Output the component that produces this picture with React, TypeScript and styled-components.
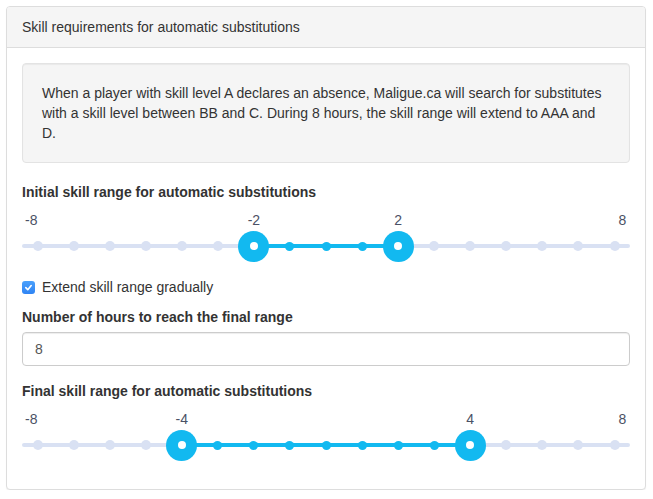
import React from "react";
import styled, { createGlobalStyle } from "styled-components";

const GlobalStyle = createGlobalStyle`
  html, body { margin: 0; padding: 0; background: #fff; }
  body {
    font-family: "Liberation Sans", Arial, sans-serif;
    font-size: 14px;
    line-height: 20px;
    color: #333;
  }
  * { box-sizing: border-box; }
`;

const Panel = styled.section`
  margin: 6px 0 0 6px;
  width: 640px;
  border: 1px solid #ddd;
  border-radius: 4px;
  background: #fff;
  box-shadow: 0 1px 1px rgba(0, 0, 0, 0.05);
`;

const PanelHeading = styled.div`
  padding: 10px 15px;
  background: #f5f5f5;
  border-bottom: 1px solid #ddd;
  border-radius: 3px 3px 0 0;
`;

const PanelBody = styled.div`
  padding: 15px 15px 23px;
`;

const Well = styled.div`
  padding: 19px;
  background: #f5f5f5;
  border: 1px solid #e3e3e3;
  border-radius: 4px;
  box-shadow: inset 0 1px 1px rgba(0, 0, 0, 0.05);
  margin-bottom: 19px;
`;

const FieldLabel = styled.label`
  display: block;
  font-weight: bold;
  margin-bottom: 5px;
`;

const CheckRow = styled.label`
  display: flex;
  align-items: center;
  gap: 7px;
  margin: 10px 0;
`;

const CheckBox = styled.span`
  width: 13px;
  height: 13px;
  border-radius: 3px;
  background: linear-gradient(#4aa0fb, #2f84f4);
  display: flex;
  align-items: center;
  justify-content: center;
`;

const TextInput = styled.input`
  display: block;
  width: 100%;
  height: 34px;
  padding: 6px 12px;
  font: inherit;
  color: #555;
  border: 1px solid #ccc;
  border-radius: 4px;
  box-shadow: inset 0 1px 1px rgba(0, 0, 0, 0.075);
  margin-bottom: 15px;
  outline: none;
`;

const SliderBox = styled.div`
  position: relative;
  height: 60px;
`;

/* the rail lies underneath the ticks */
const Rail = styled.div`
  position: absolute;
  left: 0;
  right: 0;
  top: 37px;
  height: 4px;
  border-radius: 2px;
`;

const TickRow = styled.div`
  position: relative;
  display: flex;
  justify-content: space-between;
  padding: 3px 15.5px 0;
`;

const Tick = styled.div<{ $align: "start" | "center" | "end" }>`
  width: 0;
  display: flex;
  flex-direction: column;
  align-items: ${(p) => (p.$align === "start" ? "flex-start" : p.$align === "end" ? "flex-end" : "center")};
`;

const TickLabel = styled.span<{ $shift?: boolean }>`
  height: 20px;
  line-height: 20px;
  color: #4b5165;
  white-space: nowrap;
  padding-left: ${(p) => (p.$shift ? "4px" : "0")};
`;

const MarkCell = styled.div`
  align-self: center;
  width: 0;
  height: 32px;
  display: flex;
  align-items: center;
  justify-content: center;
`;

const Dot = styled.span<{ $on: boolean }>`
  flex: none;
  width: ${(p) => (p.$on ? 9 : 10)}px;
  height: ${(p) => (p.$on ? 9 : 10)}px;
  border-radius: 50%;
  background: ${(p) => (p.$on ? "#12b9f0" : "#d9e1f3")};
`;

const Handle = styled.span`
  flex: none;
  width: 31px;
  height: 31px;
  border-radius: 50%;
  background: #12b9f0;
  display: flex;
  align-items: center;
  justify-content: center;
  &::after {
    content: "";
    width: 8px;
    height: 8px;
    border-radius: 50%;
    background: #fff;
  }
`;

const PAD = 15.5;
const GREY = "#d9e1f3";
const BLUE = "#12b9f0";

function RangeSlider({ min, max, from, to }: { min: number; max: number; from: number; to: number }) {
  const span = max - min;
  const f = (v: number) => (v - min) / span;
  const at = (v: number) => `calc(${PAD}px + ${f(v)} * (100% - ${PAD * 2}px))`;
  const values: number[] = [];
  for (let v = min; v <= max; v++) values.push(v);
  const rail = `linear-gradient(to right, ${GREY} 0, ${GREY} ${at(from)}, ${BLUE} ${at(from)}, ${BLUE} ${at(to)}, ${GREY} ${at(to)}, ${GREY} 100%)`;
  return (
    <SliderBox>
      <Rail style={{ background: rail }} />
      <TickRow>
        {values.map((v) => {
          const isHandle = v === from || v === to;
          const showLabel = isHandle || v === min || v === max;
          const align = v === min ? "end" : v === max ? "start" : "center";
          return (
            <Tick key={v} $align={align}>
              <TickLabel $shift={v === max}>{showLabel ? v : ""}</TickLabel>
              <MarkCell>{isHandle ? <Handle /> : <Dot $on={v > from && v < to} />}</MarkCell>
            </Tick>
          );
        })}
      </TickRow>
    </SliderBox>
  );
}

export default function App() {
  return (
    <>
      <GlobalStyle />
      <Panel>
        <PanelHeading>Skill requirements for automatic substitutions</PanelHeading>
        <PanelBody>
          <Well>
            When a player with skill level A declares an absence, Maligue.ca will search for
            substitutes with a skill level between BB and C. During 8 hours, the skill range will
            extend to AAA and D.
          </Well>
          <FieldLabel>Initial skill range for automatic substitutions</FieldLabel>
          <RangeSlider min={-8} max={8} from={-2} to={2} />
          <CheckRow>
            <CheckBox>
              <svg width="9" height="9" viewBox="0 0 10 10">
                <path d="M2 5.2 L4.2 7.4 L8 2.8" fill="none" stroke="#fff" strokeWidth="1.8" strokeLinecap="round" strokeLinejoin="round" />
              </svg>
            </CheckBox>
            Extend skill range gradually
          </CheckRow>
          <FieldLabel>Number of hours to reach the final range</FieldLabel>
          <TextInput defaultValue="8" />
          <FieldLabel>Final skill range for automatic substitutions</FieldLabel>
          <RangeSlider min={-8} max={8} from={-4} to={4} />
        </PanelBody>
      </Panel>
    </>
  );
}
